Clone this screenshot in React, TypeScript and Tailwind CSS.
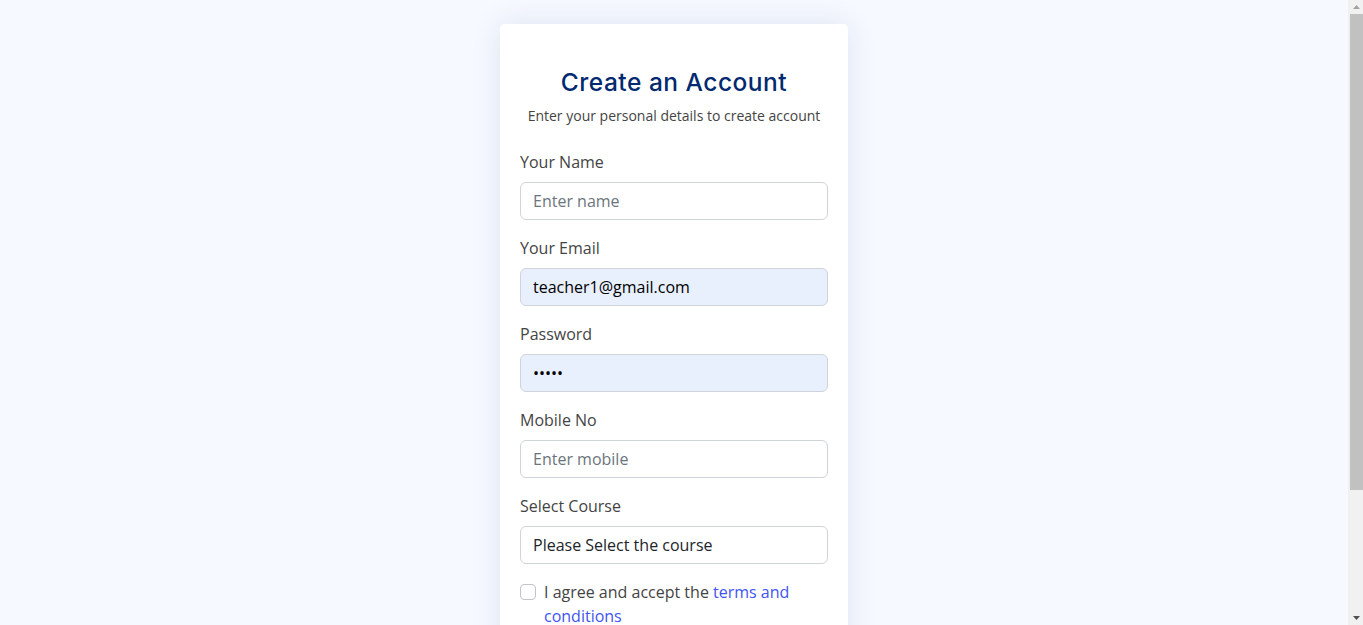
import React from "react";

export default function App() {
  return (
    <div
      className="flex h-[625px] overflow-hidden bg-[#f6f9ff] text-[#444444]"
      style={{ fontFamily: '"Open Sans", "Noto Sans", sans-serif' }}
    >
      <div className="flex-1 flex justify-center py-6">
        <div className="w-[348px] h-fit mb-4 bg-white rounded-[5px] shadow-[0_0_30px_rgba(1,41,112,0.1)]">
          <div className="px-5 pb-5">
            <div className="pt-6 pb-2">
              <h5
                className="pt-5 pb-0 mb-2 text-center text-[24.5px] leading-[1.2] font-medium tracking-[0.5px] text-[#012970]"
                style={{ fontFamily: 'Inter, "Noto Sans", sans-serif' }}
              >
                Create an Account
              </h5>
              <p className="text-center text-[14px] leading-[21px] mb-4">
                Enter your personal details to create account
              </p>
            </div>
            <form className="flex flex-col gap-4" onSubmit={(e) => e.preventDefault()}>
              <div>
                <label className="block mb-2 text-[16px] leading-6">Your Name</label>
                <input
                  className="block w-full h-[38px] px-3 text-[16px] border border-[#ced4da] rounded-[6px] bg-white text-[#212529] placeholder:text-[#6c757d] outline-none"
                  placeholder="Enter name"
                />
              </div>
              <div>
                <label className="block mb-2 text-[16px] leading-6">Your Email</label>
                <input
                  className="block w-full h-[38px] px-3 text-[16px] border border-[#ced4da] rounded-[6px] bg-[#e8f0fe] text-[#000000] outline-none"
                  defaultValue="teacher1@gmail.com"
                />
              </div>
              <div>
                <label className="block mb-2 text-[16px] leading-6">Password</label>
                <input
                  type="password"
                  className="block w-full h-[38px] px-3 text-[16px] border border-[#ced4da] rounded-[6px] bg-[#e8f0fe] text-[#000000] outline-none"
                  defaultValue="12345"
                />
              </div>
              <div>
                <label className="block mb-2 text-[16px] leading-6">Mobile No</label>
                <input
                  className="block w-full h-[38px] px-3 text-[16px] border border-[#ced4da] rounded-[6px] bg-white text-[#212529] placeholder:text-[#6c757d] outline-none"
                  placeholder="Enter mobile"
                />
              </div>
              <div>
                <label className="block mb-2 text-[16px] leading-6">Select Course</label>
                <div className="flex items-center w-full h-[38px] px-3 text-[16px] border border-[#ced4da] rounded-[6px] bg-white text-[#212529]">
                  Please Select the course
                </div>
              </div>
              <div className="flex items-start gap-2">
                <span className="mt-1 shrink-0 w-4 h-4 border border-[#bfc4ca] rounded-[4px] bg-white" />
                <span className="text-[16px] leading-6">
                  I agree and accept the <a className="text-[#4154f1]">terms and conditions</a>
                </span>
              </div>
              <div>
                <button className="w-full h-[38px] rounded-[6px] bg-[#0d6efd] text-white text-[16px]">
                  Create Account
                </button>
              </div>
              <p className="text-[14px] leading-[21px] mb-0">
                Already have an account? <a className="text-[#4154f1]">Log in</a>
              </p>
            </form>
          </div>
        </div>
      </div>
      <div className="w-[15px] shrink-0 flex flex-col bg-[#f1f1f1] pl-[2px]">
        <div className="h-[14px] flex items-center justify-center">
          <svg width="7" height="4" viewBox="0 0 7 4"><path d="M3.5 0L7 4H0z" fill="#a3a3a3" /></svg>
        </div>
        <div className="h-[476px] bg-[#c1c1c1]" />
        <div className="flex-1 flex items-end justify-center pb-[5px]">
          <svg width="7" height="4" viewBox="0 0 7 4"><path d="M0 0H7L3.5 4z" fill="#505050" /></svg>
        </div>
      </div>
    </div>
  );
}
